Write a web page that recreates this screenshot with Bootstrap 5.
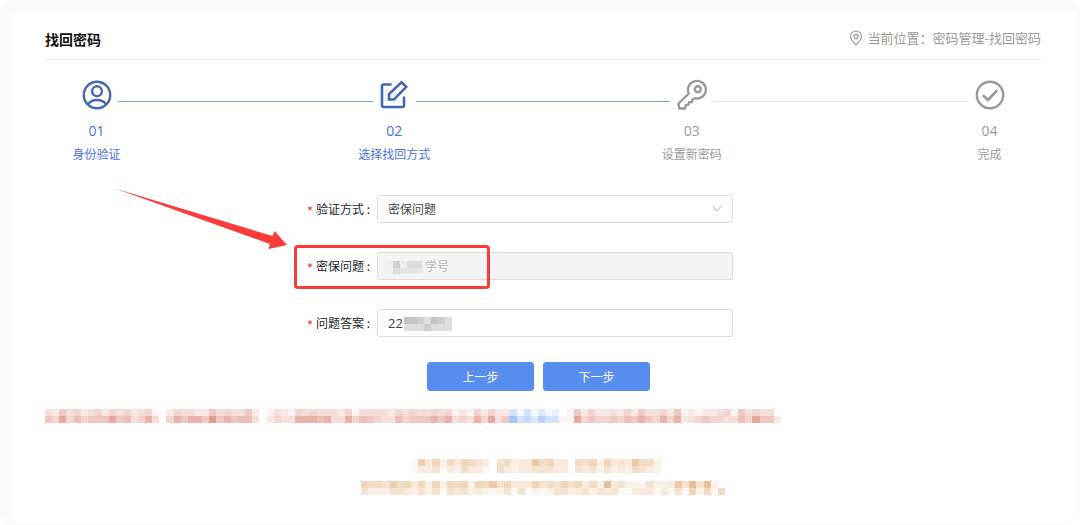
<!DOCTYPE html>
<html lang="zh-CN">
<head>
<meta charset="utf-8">
<meta name="viewport" content="width=device-width, initial-scale=1">
<title>找回密码</title>
<link href="https://cdn.jsdelivr.net/npm/bootstrap@5.3.0/dist/css/bootstrap.min.css" rel="stylesheet">
<style>
  body { font-family: "Noto Sans CJK SC", sans-serif; font-size: 12px; line-height: 20px; color: #333; background: #fff; }
  .page-frame { background: #f8faff; border-radius: 14px; padding: 12px 3px 2px 10px; min-height: 100vh; }
  .panel { background: #fff; padding: 15px 36px 27px 35px; }
  .panel-head { border-bottom: 1px solid #ececec; padding: 1px 0 9px; }
  .panel-head h1 { font-size: 14px; line-height: 22px; font-weight: 700; color: #111; }
  .crumb { font-size: 13px; color: #999; }
  .steps { padding: 19px 30px 0; }
  .step { width: 43px; color: #999; white-space: nowrap; }
  .step.done { color: #4a6fe3; }
  .step svg { width: 32px; height: 32px; }
  .step.done svg { color: #4468ae; }
  .step-no { font-family: "Open Sans", sans-serif; font-size: 14px; margin-top: 10px; }
  .step-label { margin-top: 3px; }
  .step-line { height: 1px; margin-top: 22px; background: #e8e8e8; }
  .step-line.done { background: #7da0f2; }
  .verify { padding-top: 31px; }
  .field { margin-bottom: 29px; }
  .field-label { padding-right: 7px; color: #222; }
  .field-label span { color: #e0433f; font-size: 14px; line-height: 16px; vertical-align: bottom; }
  .field-box { width: 356px; }
  .field-box .form-control, .field-box .form-select {
    height: 28px; padding: 0 10px 1px; font-size: 12px; line-height: 20px; color: #444;
    border: 1px solid #dcdcdc; border-radius: 3px; box-shadow: none;
  }
  .field-box .form-select { background-image: none; }
  .field-box .form-control:disabled { background: #f4f4f4; color: #b4b4b4; padding-left: 47px; opacity: 1; }
  .field-box .answer-input { font-family: "Open Sans", sans-serif; font-size: 13px; }
  .chevron { right: 11px; top: 10px; }
  .mask-question { left: 8px; top: 6px; }
  .mask-answer { left: 27px; top: 8px; }
  .callout-box { left: -83px; top: -7px; width: 196px; height: 44px; border: 3px solid #fb3a3a; border-radius: 4px; }
  .callout-arrow { left: -263px; top: -64px; }
  .actions { gap: 9px; padding-right: 9px; margin-top: -4px; }
  .actions .btn { width: 107px; height: 29px; padding: 0; font-size: 12px; line-height: 20px; border-radius: 3px; background: #588df0; border-color: #588df0; }
  .notice { margin: 18px 0 0; }
  .contact { margin-top: 29px; }
</style>
</head>
<body>
<div class="page-frame d-flex flex-column">
  <main class="panel flex-grow-1">
    <header class="panel-head d-flex justify-content-between align-items-start">
      <h1 class="m-0">找回密码</h1>
      <div class="crumb d-flex align-items-center gap-1">
        <svg width="14" height="16" viewBox="0 0 14 16" fill="none" stroke="currentColor" stroke-width="1.2" aria-hidden="true"><path d="M7 14.5C5 12.8 1.5 9.8 1.5 6.5a5.5 5.5 0 0 1 11 0c0 3.300-3.500 6.300-5.500 8z"/><circle cx="7" cy="6.600" r="2.200"/></svg>
        <span>当前位置：密码管理-找回密码</span>
      </div>
    </header>

    <ol class="steps list-unstyled d-flex mb-0">
      <li class="step done d-flex flex-column align-items-center flex-shrink-0">
        <svg viewBox="0 0 32 32" fill="none" stroke="currentColor" stroke-width="2.400" aria-hidden="true"><circle cx="16" cy="16" r="13.200"/><circle cx="16" cy="12.200" r="4.900"/><path d="M7 25.300c2-3 5.500-4.300 9-4.300s7 1.300 9 4.300"/></svg>
        <span class="step-no">01</span><span class="step-label">身份验证</span>
      </li>
      <li class="step-line done flex-grow-1" aria-hidden="true"></li>
      <li class="step done d-flex flex-column align-items-center flex-shrink-0">
        <svg viewBox="0 0 32 32" fill="none" stroke="currentColor" stroke-width="2.600" stroke-linejoin="round" stroke-linecap="round" aria-hidden="true"><path d="M12.500 5.500H5.500a1.500 1.500 0 0 0-1.500 1.500v19.500A1.500 1.500 0 0 0 5.500 28H24.500a1.500 1.500 0 0 0 1.500-1.500V18.500"/><path d="M11 20.500v-5.500L23.500 3.300l4.700 4.500L16 20.500z" stroke-linejoin="miter"/></svg>
        <span class="step-no">02</span><span class="step-label">选择找回方式</span>
      </li>
      <li class="step-line done flex-grow-1" aria-hidden="true"></li>
      <li class="step d-flex flex-column align-items-center flex-shrink-0">
        <svg viewBox="0 0 32 32" fill="none" stroke="currentColor" stroke-width="2.400" stroke-linejoin="round" aria-hidden="true"><path d="M12.800 14.500A9 8.800 0 1 1 18.500 19.200L16.500 20.500 16 23l-3 .3-.7 2.500-2.600.5-.7 3.200H3.300l-.8-5z"/><circle cx="21.800" cy="10.300" r="3"/></svg>
        <span class="step-no">03</span><span class="step-label">设置新密码</span>
      </li>
      <li class="step-line flex-grow-1" aria-hidden="true"></li>
      <li class="step d-flex flex-column align-items-center flex-shrink-0">
        <svg viewBox="0 0 32 32" fill="none" stroke="currentColor" stroke-width="2.400" stroke-linecap="round" stroke-linejoin="round" aria-hidden="true"><circle cx="16" cy="16" r="13.200"/><path d="M9.500 16.800l4.500 4.200 8.500-9" stroke-width="2.600"/></svg>
        <span class="step-no">04</span><span class="step-label">完成</span>
      </li>
    </ol>

    <form class="verify">
      <div class="field row g-0 align-items-center">
        <label class="field-label col-4 text-end" for="method"><span>*</span> 验证方式 :</label>
        <div class="field-box position-relative">
          <select class="form-select" id="method"><option>密保问题</option></select>
          <svg class="chevron position-absolute pe-none" width="10" height="8" viewBox="0 0 10 8" fill="none" stroke="#b5b5b5" aria-hidden="true"><path d="M1 1l4 5.500L9 1"/></svg>
        </div>
      </div>
      <div class="field row g-0 align-items-center">
        <label class="field-label col-4 text-end" for="question"><span>*</span> 密保问题 :</label>
        <div class="field-box position-relative">
          <input class="form-control" id="question" type="text" value="学号" disabled>
          <svg class="mask-question position-absolute pe-none" width="39" height="18" viewBox="0 0 39 18" aria-hidden="true"><path fill="#eee" d="M0 3h39v13H0z"/><path fill="#cfcfcf" d="M8 3h7v7H8z"/><path fill="#dcdcdc" d="M8 10h7v6H8zM22 3h15v7H22z"/><path fill="#e4e4e4" d="M15 10h22v5H15z"/></svg>
          <div class="callout-box position-absolute pe-none"></div>
          <svg class="callout-arrow position-absolute pe-none" width="174" height="64" viewBox="0 0 174 64" aria-hidden="true"><path fill="#fb3a3a" d="M1 .5L158.500 48l2-5L173 57l-18.500 4 1.500-5z"/></svg>
        </div>
      </div>
      <div class="field row g-0 align-items-center">
        <label class="field-label col-4 text-end" for="answer"><span>*</span> 问题答案 :</label>
        <div class="field-box position-relative">
          <input class="form-control answer-input" id="answer" type="text" value="22">
          <svg class="mask-answer position-absolute pe-none" width="48" height="14" viewBox="0 0 48 14" aria-hidden="true"><path fill="#dedede" d="M0 0h48v14H0z"/><path fill="#c4c4c4" d="M0 0h13v7H0zM27 0h7v7h-7z"/><path fill="#cecece" d="M13 0h7v7h-7zM34 0h7v7h-7zM20 7h7v7h-7z"/></svg>
        </div>
      </div>
      <div class="actions d-flex justify-content-center">
        <button class="btn btn-primary" type="button">上一步</button>
        <button class="btn btn-primary" type="submit">下一步</button>
      </div>
    </form>

    <div class="notice"><svg class="d-block" id="notice" width="736" height="21" viewBox="0 0 103 3" preserveAspectRatio="none" shape-rendering="crispEdges" aria-hidden="true"></svg></div>
    <div class="contact"><svg class="d-block mx-auto" id="contact" width="364" height="36" viewBox="0 0 51 5" preserveAspectRatio="none" shape-rendering="crispEdges" aria-hidden="true"></svg></div>
  </main>
</div>
<script src="https://cdn.jsdelivr.net/npm/bootstrap@5.3.0/dist/js/bootstrap.bundle.min.js"></script>
<script>
  // Each digit is the strength of one mosaic tile, 0 being empty.
  function mosaic(id, rows, colour) {
    const svg = document.getElementById(id);
    rows.forEach(([y, levels]) => [...levels].forEach((level, x) => {
      if (level === '0') return;
      const tile = document.createElementNS('http://www.w3.org/2000/svg', 'rect');
      tile.setAttribute('x', x);
      tile.setAttribute('y', y);
      tile.setAttribute('width', 1);
      tile.setAttribute('height', 1);
      tile.setAttribute('fill', colour(x));
      tile.setAttribute('fill-opacity', level * 0.06);
      svg.append(tile);
    }));
  }
  mosaic('notice', [
    [0, '32534234243423410' + '2433225343352' + '0' + '1321' + '434333241333324343343412142422' + '4141312' + '0152422324253342512122341534330'],
    [1, '54846455585634730' + '4757759575663' + '0' + '2433' + '777673374654336455575734374835' + '8453644' + '1184544546575474723454433648552']
  ], x => x > 64 && x < 72 ? '#4682f0' : '#c84b3c');
  mosaic('contact', [
    [0, '000000017362536543' + '0452338563305462634385520'],
    [1, '000000013341325331' + '0532334443304342423254320'],
    [3, '65547563626265626584633364546463529342214223849492' + '0'],
    [4, '422244324241434232124141212442342434113331314162515']
  ], () => '#d78c41');
</script>
</body>
</html>
